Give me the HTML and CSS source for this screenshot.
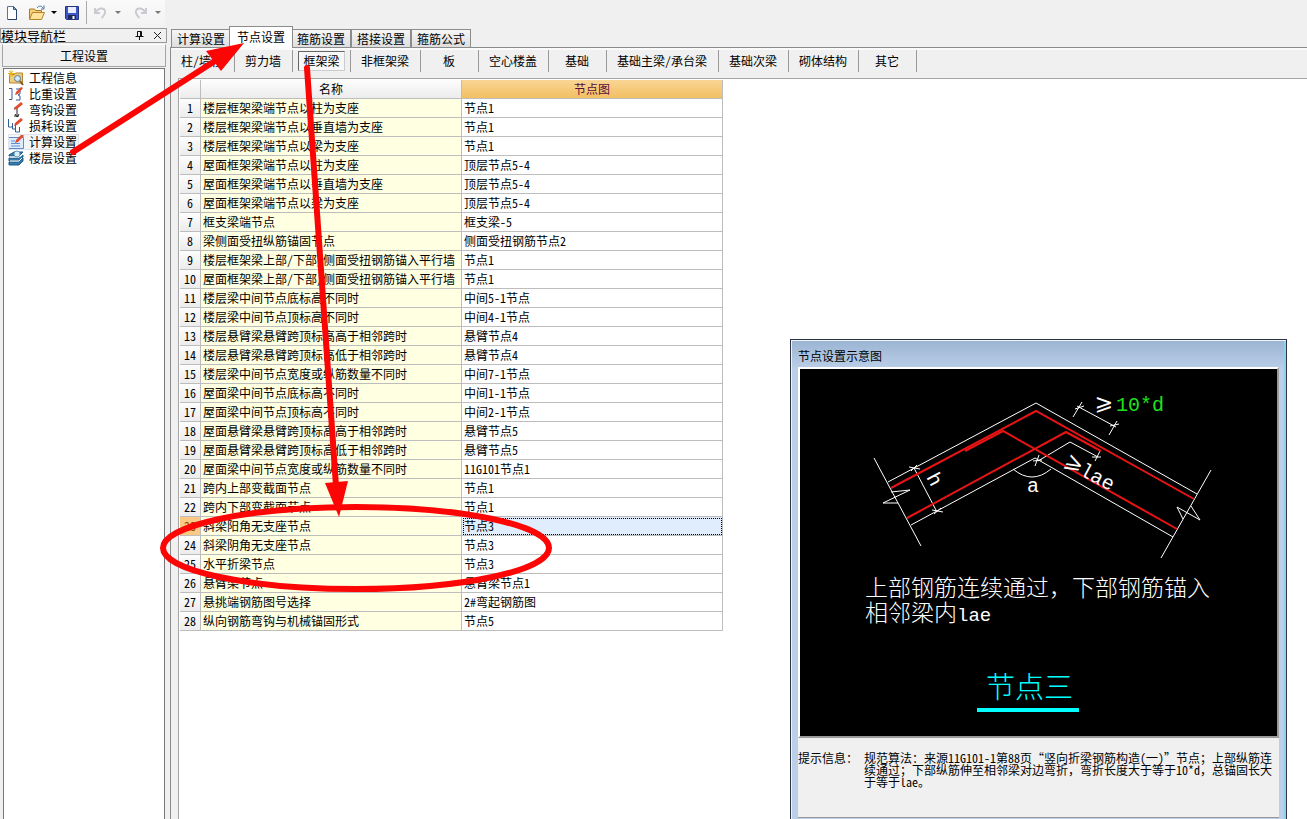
FILE: index.html
```html
<!DOCTYPE html>
<html lang="zh-CN">
<head>
<meta charset="utf-8">
<title>工程设置</title>
<link rel="stylesheet" href="styles.css">
</head>
<body>
<div class="app">
  <header class="toolbar">
    <button class="tool" aria-label="新建"><svg width="16" height="16" viewBox="0 0 16 16"><path d="M3.500 1.500h6l3 3v10h-9z" fill="#fff" stroke="#5b7596"/><path d="M9.500 1.500v3h3z" fill="#9db6d6" stroke="#3b5577"/><path d="M12.500 5v9.500H4" fill="none" stroke="#29456b"/></svg></button>
    <button class="tool open" aria-label="打开"><svg width="18" height="16" viewBox="0 0 18 16"><path d="M1.500 14V4h5l1 1.500h6V8" fill="#f5cf74" stroke="#a9792a"/><path d="M1.500 14.500 4.500 7.500h12l-3 7z" fill="#ffe39a" stroke="#b5822d"/><path d="M9 3c2-2.500 4.500-2.500 6 0M16 .5V4h-3" fill="none" stroke="#4d7396"/></svg><i class="caret"></i></button>
    <button class="tool" aria-label="保存"><svg width="16" height="16" viewBox="0 0 16 16"><path d="M1.500 1.500h13v13h-12l-1-1z" fill="#3f58c8" stroke="#27327c"/><path d="M4 2h8v6H4z" fill="#e9efff"/><path d="M4 10h8v4H4z" fill="#20285e"/><path d="M8.500 11h2v3h-2z" fill="#fff"/></svg></button>
    <span class="bar"></span>
    <button class="tool undo" aria-label="撤销"><svg width="16" height="16" viewBox="0 0 16 16"><path d="M2 3v5h5M2.500 7.500C5 3 11 2 12 6c.8 3-1.500 5-3.500 7" fill="none" stroke="#c9cbd0" stroke-width="2"/></svg><i class="caret dim"></i></button>
    <button class="tool undo" aria-label="恢复"><svg width="16" height="16" viewBox="0 0 16 16"><path d="M13 3v5H8M12.500 7.500C10 3 4 2 3 6c-.8 3 1.500 5 3.500 7" fill="none" stroke="#c9cbd0" stroke-width="2"/></svg><i class="caret dim"></i></button>
  </header>
  <div class="body">
    <aside class="nav">
      <div class="nav-head"><span>模块导航栏</span>
        <button aria-label="固定"><svg width="9" height="9" viewBox="0 0 9 9"><path d="M2.500 5V.5h4V5M.5 5.500h8M4.500 6v3M5.500 1v4" fill="none" stroke="#111"/></svg></button>
        <button aria-label="关闭"><svg width="9" height="9" viewBox="0 0 9 9"><path d="M1 1l7 7M8 1L1 8" stroke="#222"/></svg></button>
      </div>
      <button class="nav-group">工程设置</button>
      <nav class="tree">
        <button><svg width="16" height="16" viewBox="0 0 16 16"><path d="M1.500 4.500h5l1-1.500h7v10h-13z" fill="#f0cd7c" stroke="#b68531"/><path d="M3 0v7M0 3.500h7M1 1l4 5M5 1L1 6" stroke="#e9b31c"/><circle cx="9.500" cy="8.500" r="3" fill="#d5ebfb" stroke="#567897"/><path d="M12 11l3 4" stroke="#7a5b36" stroke-width="2"/></svg>工程信息</button>
        <button><svg width="16" height="16" viewBox="0 0 16 16"><path d="M1 2.500h3v11H1M8 3h4v5l-2 1 2 1v4H8" fill="none" stroke="#315f99"/><path d="M7 9l1-3 5-5 2 1-5 6z" fill="#e34b31"/></svg>比重设置</button>
        <button><svg width="16" height="16" viewBox="0 0 16 16"><path d="M6 6h3v7M6 14h5M7 12l2 3 2-3" fill="none" stroke="#222"/><path d="M6 8l1-3 6-5 2 2-6 5z" fill="#e34b31"/></svg>弯钩设置</button>
        <button><svg width="16" height="16" viewBox="0 0 16 16"><path d="M.5 1v8h4V5v6h3V6v8h4V9" fill="none" stroke="#315f99"/><path d="M6 8l1-3 6-5 2 2-6 5z" fill="#e34b31"/></svg>损耗设置</button>
        <button class="current"><svg width="16" height="16" viewBox="0 0 16 16"><path d="M.5 3.500h15v11H.5z" fill="#dcecff" stroke="#5f8bc6"/><path d="M3 7h4M3 9.500h9M3 12h9" stroke="#668fc7"/><path d="M7 9l1-3 6-6 2 2-6 6z" fill="#e34b31"/></svg>计算设置</button>
        <button><svg width="16" height="16" viewBox="0 0 16 16"><path d="M1 5l5-3h9l-4 4H1zM1 8h10l4-3v2l-4 4H1zM1 12h10l4-4v3l-4 4H1z" fill="#337cad" stroke="#235a86"/><path d="M2 7h9l3-2M2 11h9l3-3" fill="none" stroke="#fff"/><circle cx="9" cy="4" r="3" fill="#d8effc" stroke="#6695b5"/></svg>楼层设置</button>
      </nav>
    </aside>
    <main class="main">
      <div class="tabs">
        <button>计算设置</button><button class="active">节点设置</button><button>箍筋设置</button><button>搭接设置</button><button>箍筋公式</button>
      </div>
      <section class="page">
        <div class="subtabs">
          <button><span>柱/墙柱</span></button><button><span>剪力墙</span></button><button class="pressed"><span>框架梁</span></button><button><span>非框架梁</span></button><button><span>板</span></button><button><span>空心楼盖</span></button><button><span>基础</span></button><button><span>基础主梁/承台梁</span></button><button><span>基础次梁</span></button><button><span>砌体结构</span></button><button><span>其它</span></button>
        </div>
        <div class="sheet">
          <table class="grid">
            <colgroup><col class="c-no"><col class="c-name"><col class="c-node"></colgroup>
            <thead><tr><th></th><th>名称</th><th class="hot">节点图</th></tr></thead>
            <tbody>
              <tr><th>1</th><td>楼层框架梁端节点以柱为支座</td><td>节点1</td></tr>
              <tr><th>2</th><td>楼层框架梁端节点以垂直墙为支座</td><td>节点1</td></tr>
              <tr><th>3</th><td>楼层框架梁端节点以梁为支座</td><td>节点1</td></tr>
              <tr><th>4</th><td>屋面框架梁端节点以柱为支座</td><td>顶层节点5-4</td></tr>
              <tr><th>5</th><td>屋面框架梁端节点以垂直墙为支座</td><td>顶层节点5-4</td></tr>
              <tr><th>6</th><td>屋面框架梁端节点以梁为支座</td><td>顶层节点5-4</td></tr>
              <tr><th>7</th><td>框支梁端节点</td><td>框支梁-5</td></tr>
              <tr><th>8</th><td>梁侧面受扭纵筋锚固节点</td><td>侧面受扭钢筋节点2</td></tr>
              <tr><th>9</th><td>楼层框架梁上部/下部/侧面受扭钢筋锚入平行墙</td><td>节点1</td></tr>
              <tr><th>10</th><td>屋面框架梁上部/下部/侧面受扭钢筋锚入平行墙</td><td>节点1</td></tr>
              <tr><th>11</th><td>楼层梁中间节点底标高不同时</td><td>中间5-1节点</td></tr>
              <tr><th>12</th><td>楼层梁中间节点顶标高不同时</td><td>中间4-1节点</td></tr>
              <tr><th>13</th><td>楼层悬臂梁悬臂跨顶标高高于相邻跨时</td><td>悬臂节点4</td></tr>
              <tr><th>14</th><td>楼层悬臂梁悬臂跨顶标高低于相邻跨时</td><td>悬臂节点4</td></tr>
              <tr><th>15</th><td>楼层梁中间节点宽度或纵筋数量不同时</td><td>中间7-1节点</td></tr>
              <tr><th>16</th><td>屋面梁中间节点底标高不同时</td><td>中间1-1节点</td></tr>
              <tr><th>17</th><td>屋面梁中间节点顶标高不同时</td><td>中间2-1节点</td></tr>
              <tr><th>18</th><td>屋面悬臂梁悬臂跨顶标高高于相邻跨时</td><td>悬臂节点5</td></tr>
              <tr><th>19</th><td>屋面悬臂梁悬臂跨顶标高低于相邻跨时</td><td>悬臂节点5</td></tr>
              <tr><th>20</th><td>屋面梁中间节点宽度或纵筋数量不同时</td><td>11G101节点1</td></tr>
              <tr><th>21</th><td>跨内上部变截面节点</td><td>节点1</td></tr>
              <tr><th>22</th><td>跨内下部变截面节点</td><td>节点1</td></tr>
              <tr class="selected"><th>23</th><td>斜梁阳角无支座节点</td><td>节点3</td></tr>
              <tr><th>24</th><td>斜梁阴角无支座节点</td><td>节点3</td></tr>
              <tr><th>25</th><td>水平折梁节点</td><td>节点3</td></tr>
              <tr><th>26</th><td>悬臂梁节点</td><td>悬臂梁节点1</td></tr>
              <tr><th>27</th><td>悬挑端钢筋图号选择</td><td>2#弯起钢筋图</td></tr>
              <tr><th>28</th><td>纵向钢筋弯钩与机械锚固形式</td><td>节点5</td></tr>
            </tbody>
          </table>
        </div>
      </section>
    </main>
  </div>

  <section class="dialog">
    <h2>节点设置示意图</h2>
    <div class="drawing">
      <svg viewBox="800 369 477 367" role="img" aria-label="节点三">
        <g fill="none" stroke="#fff" stroke-width="1">
          <path d="M888 482L1036 403L1197 494M911 525L1035 458L1173 537"/>
          <path d="M874 458L921 546M891 492L910 490L883 503H898"/>
          <path d="M1211 470L1161 558M1183 519L1177 507L1200 520L1191 506"/>
          <path d="M914 468L937 512M909 467l11 2M917 465l-6 6M932 510l11 2M941 508l-7 6"/>
          <path d="M1013 469Q1032 485 1051 469"/>
          <path d="M1038 461L1070 442L1098 457M1033 461l9-1M1039 455l-4 11M1092 457l9 0M1100 451l-5 10"/>
          <path d="M1077 406L1116 427M1082 402L1073 417M1075 409l9-3M1117 421L1109 435M1110 426l9-2"/>
        </g>
        <g fill="none" stroke="#e81414" stroke-width="2">
          <path d="M891 488L1036 411L1194 499"/>
          <path d="M965 451L1003 431L1177 529"/>
          <path d="M907 518L1066 432L1101 451"/>
        </g>
        <g class="cad">
          <text class="sym" x="1095" y="411">⩾</text>
          <text class="green" x="1116" y="411">10*d</text>
          <text x="1027" y="492">a</text>
          <text transform="translate(926 477) rotate(62)">h</text>
          <text transform="translate(1063 466) rotate(28)"><tspan class="sym">⩾</tspan><tspan>lae</tspan></text>
          <text class="note" x="865" y="596">上部钢筋连续通过，下部钢筋锚入</text>
          <text class="note" x="865" y="621">相邻梁内<tspan class="latin">lae</tspan></text>
          <text class="caption" x="986" y="698">节点三</text>
        </g>
        <path d="M977 710H1079" stroke="#0ff" stroke-width="4"/>
      </svg>
    </div>
    <div class="hint">
      <span class="hint-label">提示信息：</span>
      <p>规范算法：来源11G101-1第88页“竖向折梁钢筋构造(一)”节点；上部纵筋连<br>续通过；下部纵筋伸至相邻梁对边弯折<span class="full">，</span>弯折长度大于等于10*d<span class="full">，</span>总锚固长大<br>于等于lae。</p>
    </div>
  </section>

  <svg class="marks" width="560" height="600" viewBox="0 0 560 600" aria-hidden="true">
    <g fill="none" stroke="#fb0505" stroke-width="6">
      <path d="M73 152L218 59" stroke-linecap="round"/>
      <path d="M307 68L336 486" stroke-linecap="round"/>
      <ellipse cx="356" cy="548" rx="193" ry="41"/>
    </g>
    <path d="M244 43L206 51L221 71zM325 483L348 481L339 517z" fill="#fb0505"/>
  </svg>
</div>
</body>
</html>
```
FILE: styles.css
```css
* { box-sizing: border-box; }

body {
  margin: 0;
  background: #f0f0f0;
  color: #000;
  font: 12px/16px "Noto Sans CJK SC", sans-serif;
  font-feature-settings: "hwid";
}

button {
  margin: 0;
  padding: 0;
  border: 0;
  background: none;
  color: inherit;
  font: inherit;
  font-feature-settings: inherit;
  white-space: nowrap;
}

svg { display: block; flex: none; }

.app {
  position: relative;
  display: flex;
  flex-direction: column;
  min-height: 100vh;
  overflow: hidden;
}

/* toolbar */
.toolbar {
  display: flex;
  align-items: center;
  align-self: flex-start;
  height: 27px;
  padding: 0 4px 2px;
  background: linear-gradient(#fafafa, #f2f2f2);
}
.tool { display: flex; align-items: center; }
.open { gap: 5px; margin: 0 7px 0 8px; }
.undo { gap: 6px; margin-right: 12px; }
.undo:last-child { margin-right: 0; }
.caret {
  border: 3px solid transparent;
  border-top-color: #000;
  border-bottom-width: 0;
}
.caret.dim { border-top-color: #777; }
.bar { width: 1px; height: 23px; margin: 0 6px; background: #aaa; }

.body { display: flex; flex: 1; }

/* navigation */
.nav {
  display: flex;
  flex-direction: column;
  width: 167px;
  padding-top: 1px;
}
.nav-head {
  display: flex;
  align-items: center;
  gap: 9px;
  height: 15px;
  padding-right: 4px;
  border: 1px solid #999;
  font-size: 13px;
  line-height: 13px;
}
.nav-head span { flex: 1; }
.nav-group {
  height: 23px;
  margin: 1px 1px 1px 2px;
  border: 1px solid #a5a5a5;
  border-top-color: #fff;
  background: #f0f0f0;
}
.tree {
  flex: 1;
  display: flex;
  flex-direction: column;
  align-items: flex-start;
  margin: 0 2px 0 3px;
  padding: 1px 4px;
  border: 1px solid #777;
  border-bottom: 0;
  background: #fff;
}
.tree button {
  display: flex;
  align-items: center;
  gap: 5px;
  height: 16px;
  padding-right: 2px;
}
.tree .current { background: #f3f5f8; outline: 1px solid #e0e4ea; outline-offset: -1px; }

/* tabs */
.main {
  flex: 1;
  display: flex;
  flex-direction: column;
  min-width: 0;
  padding-left: 3px;
}
.tabs {
  display: flex;
  align-items: flex-end;
  height: 20px;
  padding-left: 1px;
}
.tabs button {
  height: 18px;
  padding: 0 5px;
  border: 1px solid #8c8c8c;
  border-bottom: 0;
  background: linear-gradient(#f6f6f6, #dedede);
}
.tabs .active {
  z-index: 1;
  height: 22px;
  margin: 0 -2px -1px;
  padding: 0 7px 2px;
  background: #fff;
}
.page {
  flex: 1;
  display: flex;
  flex-direction: column;
  border-top: 1px solid #8c8c8c;
  border-left: 1px solid #8c8c8c;
}
.subtabs {
  display: flex;
  align-items: flex-start;
  height: 30px;
  border-top: 2px solid #fafafa;
}
.subtabs button {
  min-width: 58px;
  height: 22px;
  padding: 0 4px 0 3px;
  border-right: 1px solid #999;
}
.subtabs span { display: block; padding: 2px 7px; }
.subtabs .pressed { padding: 0 5px; }
.subtabs .pressed span {
  padding: 1px 4px;
  border: 1px solid #666;
  border-right-color: #ccc;
  border-bottom-color: #ccc;
  background: #f7f7f7;
}
.sheet {
  flex: 1;
  margin-left: 7px;
  padding: 1px 0 0 1px;
  border: 1px solid #a5a5a5;
  border-right: 0;
  border-bottom: 0;
  background: #fff;
}

/* grid */
.grid {
  width: 543px;
  table-layout: fixed;
  border-spacing: 0;
}
.c-no { width: 21px; }
.c-name, .c-node { width: 261px; }
.grid th, .grid td {
  height: 19px;
  padding: 0 2px;
  border: solid #bdbdbd;
  border-width: 0 1px 1px 0;
  font-weight: 400;
  text-align: left;
  line-height: 18px;
  white-space: nowrap;
}
.grid th {
  padding: 0;
  text-align: center;
  background: linear-gradient(#fdfdfd, #ececec);
}
.grid td:nth-child(2) { background: #ffffe1; }
.grid .hot { color: #5c0a3a; background: linear-gradient(#f8d595, #f3bf62); }
.grid .selected th { background: #fbc983; color: #8a4a10; }
.grid .selected td:last-child {
  background: #e0edfd;
  outline: 1px dotted #000;
  outline-offset: -2px;
}

/* schematic window */
.dialog {
  position: absolute;
  top: 339px;
  right: 20px;
  bottom: 0;
  display: flex;
  flex-direction: column;
  width: 497px;
  padding: 0 7px 1px;
  border: 1px solid #2b3440;
  border-bottom: 0;
  box-shadow: inset 1px 1px #eef4fb, inset -2px 0 #8fd0f0;
  background: linear-gradient(#9ab4d2, #bccfe8 30px);
}
.dialog h2 {
  height: 27px;
  margin: 0;
  font-size: 12px;
  font-weight: 400;
  line-height: 32px;
}
.drawing {
  border: 2px solid #fff;
  border-right-color: #9a9a9a;
  border-bottom-color: #9a9a9a;
  background: #000;
}
.drawing svg { width: 100%; }
.hint {
  flex: 1;
  display: flex;
  padding-top: 14px;
  border-bottom: 1px solid #999;
  background: #f0f0f0;
  line-height: 12px;
}
.hint-label { width: 66px; }
.hint p { margin: 0; white-space: nowrap; }
.full { font-feature-settings: normal; }

.cad text { fill: #fff; font-family: "Liberation Mono", monospace; font-size: 20px; }
.cad .sym { font-family: "DejaVu Math TeX Gyre", "DejaVu Sans", sans-serif; font-size: 22px; }
.cad .green { fill: #1fe01f; }
.cad .note {
  font-family: "Noto Sans CJK SC", sans-serif;
  font-size: 23px;
  font-weight: 300;
  font-feature-settings: normal;
}
.cad .latin { font-family: "Liberation Mono", monospace; font-size: 19px; font-weight: 400; }
.cad .caption { fill: #0ff; font-family: "Noto Sans CJK SC", sans-serif; font-size: 29px; font-weight: 300; }

.marks {
  position: absolute;
  top: 0;
  left: 0;
  z-index: 2;
  pointer-events: none;
}
```
